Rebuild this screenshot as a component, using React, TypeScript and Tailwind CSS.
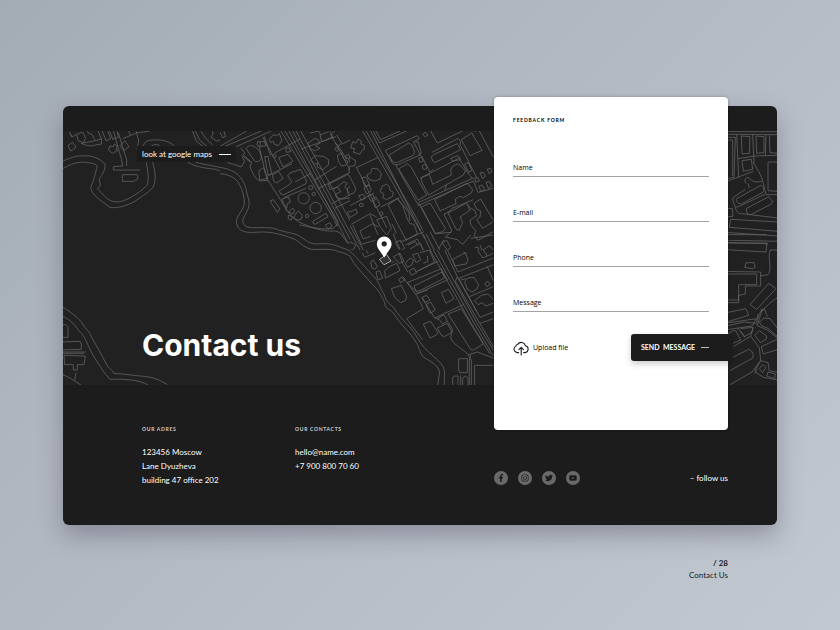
import React from "react";
import { FaFacebookF, FaInstagram, FaTwitter, FaYoutube } from "react-icons/fa";

const tiles: { x: number; y: number; w: number; h: number; lines: string[] }[] = [
  {
    // north-west bay
    x: 60,
    y: 100,
    w: 160,
    h: 150,
    lines: [
      "M0 186 C30 176 45 165 70 168 C95 164 125 178 135 193 C137 207 128 222 117 238 L122 255 L112 266 L135 290 C150 305 165 308 185 304 C215 295 250 268 262 255 C268 230 262 210 258 180 L250 137 C255 120 270 119 300 120 C320 122 332 128 345 140",
      "M0 212 C30 190 60 183 85 188 C105 190 115 195 110 205 C105 225 100 245 92 262 C95 285 120 300 150 322 C170 326 200 318 225 304 C250 285 270 275 280 260 C290 235 285 210 276 180",
      "M272 140 C283 130 295 133 302 140",
      "M24 136 L38 127 L48 142 L32 153Z",
      "M28 95 L36 111 L50 103 L54 122 L70 128 L77 115 L68 96 M36 111 L31 104 M50 103 L66 97",
      "M64 130 C80 138 98 140 110 134 L125 132 L124 117 L106 122Z M82 92 L84 98 L96 104 L106 122",
      "M114 92 L124 117 M126 92 L138 122 L152 116 L143 92 M148 92 L159 119",
      "M145 150 L150 138 L160 140 L163 132 L172 138 L168 148 L174 151 L158 160Z",
      "M160 92 L185 180 L188 198 L160 200 L160 210 L240 210 M175 98 L200 180 L200 198",
      "M180 137 L194 122 L207 140 L191 152Z M188 116 L232 98 L268 94 M172 94 L175 112 L158 118",
      "M205 92 L211 105 M228 92 L236 122 L231 150",
      "M187 224 H232 L234 236 L222 244 H187Z",
      "M397 92 L410 125 L430 140 M405 92 L420 122 L442 140 M422 92 L437 115 L458 135",
      "M457 92 L459 101 L453 112 L470 123 L489 117 L495 105 L486 96 L486 92",
      "M370 176 C385 190 405 202 460 207 C475 209 480 214 495 221 M400 183 C420 194 460 196 482 203",
    ],
  },
  {
    // north shore
    x: 220,
    y: 125,
    w: 130,
    h: 140,
    lines: [
      "M0 127 C25 131 48 140 58 154 C80 176 77 200 86 222 C92 248 78 262 71 278 C62 300 78 308 98 308 C130 308 160 306 178 316 L228 328 C255 340 262 357 290 357 C320 354 345 358 365 368 C375 371 383 374 391 379",
      "M0 146 C25 147 50 160 58 178 C68 195 73 215 73 236 C68 262 42 278 51 300 C58 322 82 323 105 322 C150 318 180 326 222 342 C240 350 250 368 275 373 C310 374 335 370 355 380 C370 383 382 388 391 394",
      "M0 22 L8 38 L16 35 L12 18 M0 64 L80 18 M10 66 L124 18 M42 68 L154 18",
      "M22 112 L64 126 L74 108 L67 98 L72 92 L95 112 L90 124 L94 136 L105 157 L120 168 L145 166",
      "M62 68 L74 84 L67 92 L92 112",
      "M78 71 C83 62 92 60 102 64 C117 72 123 85 124 102 C118 110 108 112 103 107Z",
      "M113 50 H133 L138 62 L117 65 L111 60Z M120 50 V64",
      "M128 36 L180 132 M134 95 L144 94 L155 146 L144 150Z M133 34 L152 92 M118 66 L140 160 L180 222",
      "M116 138 L131 128 L138 149 L144 160 L120 165Z",
      "M148 43 L160 29 L170 32 L178 26 L186 46 L175 62 L163 58 L160 49 L152 53Z",
      "M176 98 L203 88 L219 108 L189 126Z M157 92 L164 86 L169 94 L162 98Z M164 84 L240 42",
      "M157 150 L176 139 L189 160 L170 174 L161 168Z M142 153 L216 116 M196 70 L208 68 L212 80 L200 82Z",
      "M178 197 L210 178 L215 170 L203 152 L210 144 L241 133 L260 168 L258 176 L192 209 L182 207Z",
      "M150 228 L160 224 L180 252 L172 262Z",
      "M266 188 a6 6 0 1 0 12 0 a6 6 0 1 0 -12 0 M276 207 a5 5 0 1 0 10 0 a5 5 0 1 0 -10 0",
      "M234 220 a17 17 0 1 0 34 0 a17 17 0 1 0 -34 0 M270 249 a17 17 0 1 0 34 0 a17 17 0 1 0 -34 0",
      "M186 222 L206 216 L211 232 L202 236 L200 250 L192 238Z M196 252 L206 262 L216 250 L224 255 L219 267 L206 262",
      "M206 270 L218 276 L213 286 L204 280Z M221 279 L230 262 L236 258 L247 272 L243 283 L232 285Z",
      "M256 273 a5 5 0 1 0 10 0 a5 5 0 1 0 -10 0",
      "M278 289 L318 265 L324 275 L287 297 L281 297Z M316 300 L330 293 L336 304 L324 312Z",
      "M180 222 C200 258 215 278 238 292 C272 306 300 320 346 318 L360 323 L383 354 L404 354 L410 348",
      "M238 300 C265 303 295 316 340 310 L350 300 L344 288",
      "M183 18 L344 286 M195 18 L354 290 L350 304 M207 18 L383 352 M218 18 L394 350 M228 18 L404 348 M242 18 L420 340",
      "M226 170 L272 146 M192 218 L258 190",
      "M270 24 L296 18 L302 30 L326 20 M264 55 L284 40 L294 44 L300 54 L286 62 L300 70 L286 77 L272 73Z M300 30 L305 50 L338 36 L330 18",
      "M345 18 L332 28 L392 138 M244 72 L348 35 M350 30 L365 54 L356 62 L345 54 M348 66 L356 72 L351 80 L344 72Z",
      "M272 106 L285 92 L310 94 L326 104 L325 120 L308 134 L292 126 L292 114 L284 118 Z",
      "M352 92 L364 84 L373 104 L384 110 L378 120 L364 123 L356 110Z M354 62 L380 102 M365 58 L420 30",
      "M376 94 L386 88 L390 96 L379 102Z M386 102 L404 92 L410 108 L394 122Z M386 127 L404 122 L411 134 L396 144Z",
      "M282 166 L350 124 M296 190 L390 142 M384 132 L416 190",
      "M325 178 L384 148 L404 178 L382 190 L384 206 L396 218 L368 222 L350 218 L346 208 L362 200 L352 186 L330 194Z",
      "M342 192 L372 170 L382 176 L374 184 L388 206",
      "M336 235 L420 196 M344 250 L420 212 M382 262 L404 250 L412 266 L392 280Z",
    ],
  },
  {
    // centre blocks
    x: 350,
    y: 125,
    w: 150,
    h: 125,
    lines: [
      "M0 302 L40 375 M0 320 L30 375",
      "M38 18 L225 342 M48 18 L200 280 L218 316 M62 18 L212 318 M70 18 L88 54 L170 18 M78 18 L92 44 L150 18",
      "M2 70 L8 50 L18 54 L24 42 L34 48 L32 57 L42 60 L44 72 L36 76 L30 88 L18 84 L10 82 L14 70Z",
      "M0 96 L18 108 L14 122 L0 124 M18 128 L85 97 M0 156 L18 192 L12 204 L0 208 M20 128 L110 308",
      "M50 150 L62 144 L66 130 L84 132 L94 146 L90 162 L76 168 L58 164Z M36 158 L48 156 L58 178 L44 184Z",
      "M42 190 L58 180 L64 196 L50 208Z M26 212 L40 208 L46 220 L34 226Z M54 212 L68 208 L76 224 L64 230Z M0 242 L72 204",
      "M90 200 L98 182 L110 178 L118 184 L120 196 L130 202 L128 214 L110 224 L98 218 L102 208Z M92 246 L148 218",
      "M28 240 a6 5 0 1 0 12 0 a6 5 0 1 0 -12 0 M66 222 L78 216 L90 240 L76 248Z M0 262 L18 252 L22 264 L0 278",
      "M106 76 L202 32 L208 42 L190 50 L212 92 M118 90 L176 54 L186 60 L194 82 L188 92 L138 114 L126 108Z M106 76 L128 116 L140 120",
      "M196 52 L204 50 L214 84 L206 90 M218 28 L226 22 L234 30 L226 36Z M206 100 L214 96 L220 108 L210 112Z M217 126 a7 7 0 1 0 14 0 a7 7 0 1 0 -14 0",
      "M138 122 L210 90 M146 132 L172 116 L182 124 L230 210 L204 226Z M138 122 L206 242 M214 92 L240 142 L250 132",
      "M242 18 L262 54 L338 18 M246 82 L324 40 L332 50 L330 62 M244 96 L252 88 L322 56 L332 74 L256 112 L248 108Z",
      "M334 44 L365 24 L396 76 L360 92Z M352 16 L380 18 M388 18 L430 96 M332 62 L380 158",
      "M214 158 L238 148 L248 178 L304 150 L302 134 L310 122 L326 116 L346 138 L340 150 L236 210 L216 172Z",
      "M210 160 L330 98 M302 100 L324 92 L332 104 L308 108Z M344 118 L354 112 L366 136 L356 142Z M330 104 L352 142 L366 160",
      "M374 160 L384 158 L388 168 L378 172Z M390 144 L400 142 L406 154 L397 160Z M412 132 L422 130 L426 140 L417 146Z M386 184 L396 180 L404 194 L394 200Z M408 172 L418 170 L426 182 L415 190Z",
      "M206 232 L372 158 M284 196 L290 180 M204 242 L370 168 L384 202 L430 190",
      "M254 224 L352 174 L368 194 L364 204 L340 218 L330 214 L316 222 L318 236 L270 258Z",
      "M214 246 L240 234 L286 310 L278 320 L256 326Z M206 234 L256 326 L304 322 M282 268 L300 258 L306 250 L370 224",
      "M294 264 L350 234 L360 256 L330 276 L338 292 L328 316 L318 312Z M282 268 L306 318 L286 336 L322 344 L338 358 L362 330",
      "M372 236 L392 222 L430 286 M372 236 L380 252 L392 258 L390 276 L380 284 L398 310 L430 290 M354 240 L362 250 L374 256 L380 272 L360 286 L362 300 L378 318 L372 330 L384 346 L430 320",
      "M114 240 L142 220 L158 242 L172 282 L180 296 L192 298 L202 326 L168 346Z M142 220 L176 262 L180 288",
      "M88 264 L96 260 L100 268 L92 272Z M80 284 L110 274 L124 310 L110 330 L92 308Z M126 296 L138 322 L130 330 L150 372",
      "M4 298 L60 266 L80 276 M30 318 L68 296 L86 306 M30 318 L40 342 L62 334 M8 300 L34 358 L76 346 M60 270 L84 330",
      "M136 352 L152 346 L164 370 L150 378Z M166 360 L202 342 L236 404 M174 360 L196 350 L204 362 M180 372 L210 354 L220 376",
      "M150 352 L222 320 M220 328 L262 420 M228 326 L276 420 M240 320 L294 420 M276 352 L290 346 L302 368 L292 376Z M266 370 L282 345",
      "M306 396 L346 378 M374 368 L384 366 L394 396 M390 360 L404 402 M396 376 L420 362 L430 376 M362 340 L430 330",
      "M0 350 L18 360 L10 374 L0 376",
    ],
  },
  {
    // south-east shore
    x: 340,
    y: 250,
    w: 160,
    h: 140,
    lines: [
      "M30 4 C42 14 50 24 60 35 L100 78 C122 100 120 118 132 132 C138 156 148 160 162 174 C175 196 190 210 212 234 C228 252 236 275 252 292 C270 312 290 325 304 342 C320 364 311 380 313 405",
      "M30 19 C36 28 41 40 48 48 L98 104 C118 122 128 145 134 158 C135 182 152 174 162 192 C182 226 215 250 232 284 C242 304 240 318 262 328 C285 342 302 355 298 374 L293 405",
      "M66 8 L74 22 L106 8 M76 -4 L84 10 M92 36 L100 30 L112 50 L104 58 L96 54Z M108 66 L118 62 L128 84 L114 90Z",
      "M134 62 L148 50 L170 40 L180 62 L136 84Z M176 88 L188 80 L196 88 L182 98Z M154 40 L162 32 M160 20 L180 10 L192 34 L178 40 Z",
      "M154 116 L184 106 L200 140 L196 152 L182 158 L164 142Z",
      "M196 40 L210 24 L220 30 L216 44 L202 52Z M218 14 L234 10 L242 30 L228 38Z M208 62 L222 54 L230 68 L214 76Z M204 66 L190 44 L176 8",
      "M240 8 L268 0 L284 36 L236 62 M250 40 L264 34 L262 18 M226 66 L294 34",
      "M202 98 L304 56 L322 90 L234 130Z M222 108 L306 66 L314 84 L240 122 L228 124Z M184 82 L200 96 L232 140 L250 176 L200 206 L248 270",
      "M304 128 L326 118 L342 146 L318 160Z M228 132 L262 120 M246 142 L260 136 L270 150 L254 158Z M258 164 L272 156 L286 180 L270 190Z M246 142 L284 204 L370 164",
      "M250 222 L272 214 L294 248 L288 256 L270 264Z M294 204 L312 194 L322 212 L308 222Z M292 234 L322 220 L336 246 L314 260 L304 256Z M284 204 L296 208",
      "M324 192 L364 176 L430 282 L400 300 L392 298Z M322 214 L338 238 L332 262 L340 278 L386 314 L412 306 L460 324",
      "M270 0 L392 218 L450 312 M280 0 L400 216 L460 318 M292 0 L410 218 L460 300 M314 0 L352 80 L346 94 L460 290 M322 0 L354 66 L460 24",
      "M354 86 L460 44 M362 90 L378 86 M356 86 L420 202 L460 186 M420 220 L460 206 M352 80 L410 184",
      "M338 28 L376 8 L384 30 L378 42 L344 48Z M370 6 L380 12 M412 0 L428 24 L460 10 M430 0 L442 18",
      "M374 94 L384 84 L402 82 L416 104 L410 118 L396 126 L382 118Z M434 100 L444 94 L450 104 L440 110Z M442 50 L460 92",
      "M404 152 L424 136 L444 132 L460 148 M404 152 L414 164 L426 158 L438 168 L460 160 M388 140 L460 110",
      "M356 326 H382 V368 H360 L356 360Z M338 405 V382 L344 378 H354 V405 M362 376 V405 M368 405 V384 L376 378 L384 384 V405",
      "M384 316 L394 330 V405 M392 314 L388 330 V405 M404 405 V346 H460",
    ],
  },
  {
    // south-west shore
    x: 60,
    y: 290,
    w: 260,
    h: 100,
    lines: [
      "M0 46 C25 62 50 78 66 98 C74 116 86 120 94 140 C112 172 125 195 138 220 C146 238 158 238 162 250 C190 252 205 254 230 257 C262 260 285 260 322 284",
      "M0 76 C25 84 42 100 56 122 C76 138 78 156 90 178 C104 208 118 224 130 244 L150 268 C180 266 240 268 264 285",
      "M0 104 H18 L24 110 V142 H0 M0 156 L60 154 L64 162 V178 L0 180 M0 186 H78 M0 190 H72",
      "M12 196 L76 198 L72 224 H52 V240 H40 V224 H14Z M48 248 L44 270 M0 250 L30 264 L64 286",
    ],
  },
  {
    // north-east quarter
    x: 720,
    y: 100,
    w: 70,
    h: 145,
    lines: [
      "M0 95 H175 M0 103 L175 104 M0 112 H46 L42 232 L0 240 M0 120 H38 V228 M50 104 L56 232",
      "M64 108 L90 110 L88 160 L66 162Z M108 108 L132 110 V158 L110 160Z M148 106 L150 158 L175 160 M98 104 L102 190 M138 104 L136 166 M54 176 L104 168 L175 166",
      "M66 182 L94 178 L98 208 L70 214Z M0 252 L100 214 M100 186 C108 204 124 222 130 250 L138 284 L175 284 M175 186 H144 V272 L175 274",
      "M78 250 C70 238 78 230 88 234 C98 248 108 246 126 244 M84 250 L88 264",
      "M50 296 L122 256 C132 260 132 270 130 276 L64 312 C52 310 46 304 50 296Z M40 292 L76 268 M40 292 L38 300 L46 322 L60 318 L136 282",
      "M78 326 L146 290 L158 304 L154 312 L92 344 L82 342Z M0 326 H38 V350 H0 M46 322 L48 330 L56 340 L175 354",
      "M32 358 L175 366 M32 358 L28 382 L175 394 M0 396 L175 408 M0 404 L140 404 M0 428 L142 430 L138 450",
    ],
  },
  {
    // south-east quarter
    x: 720,
    y: 240,
    w: 70,
    h: 150,
    lines: [
      "M0 0 L175 4 M0 8 L140 10 L138 36 L0 28 M175 30 H150 C142 60 158 84 144 104 L120 108",
      "M78 68 L102 68 L106 82 L98 86 L74 82Z M0 94 L122 96 V138 H76 V162 L56 166 V188 H0 M0 102 H110 V134 H56 V180 H0",
      "M90 194 L146 130 L168 146 L110 208Z M175 172 C150 184 140 202 126 210 L112 256",
      "M0 222 L78 206 L86 226 L0 252 M0 252 L82 240 L112 236 L126 206 M0 262 L72 246 L110 250 L114 222 M0 272 L96 258 L108 238",
      "M62 266 L98 262 L96 276 L74 290 L62 274 M46 270 L62 300 L38 310 M54 264 L74 292 M20 284 L44 270",
      "M118 246 L132 234 L150 236 L175 268 M118 246 L126 258 L142 264 L175 292 M124 214 L134 208 L142 230 M110 256 L142 270 L175 296",
      "M104 286 L118 272 L140 288 L138 298 L122 308Z M100 262 L92 288 L118 324 L122 362 L104 394",
      "M124 320 L175 296 M124 320 L130 342 L175 328 M38 352 L86 328 C98 332 102 346 98 354 L30 392 M40 320 L90 290 M30 434 L96 396 L122 362 L144 368 L148 392",
      "M118 386 L128 374 L138 382 L128 398Z M106 396 L130 412 L175 420 M144 396 L166 402 L164 416 L140 408Z M112 388 L104 400 M148 392 L175 398",
    ],
  },
];

function CityMap() {
  return (
    <svg
      className="col-span-full col-start-1 row-start-2 h-full w-full bg-[#212121]"
      viewBox="63 131 714 254"
      preserveAspectRatio="xMinYMid slice"
      aria-hidden="true"
    >
      <g fill="none" stroke="#636363" strokeWidth="2.4" strokeLinejoin="round">
        {tiles.map((t) => (
          <svg key={t.x + "-" + t.y} x={t.x} y={t.y} width={t.w} height={t.h} viewBox={`0 0 ${t.w * 3} ${t.h * 3}`}>
            {t.lines.map((d) => (
              <path key={d} d={d} />
            ))}
          </svg>
        ))}
      </g>
      <path d="M379.5 259.5 L386.5 254.5 L391 261 L384 264.8 Z" fill="#333" stroke="#aaa" strokeWidth="1" />
      <path
        d="M384.2 236.6 a7.4 7.4 0 0 1 7.4 7.4 c0 4.5 -4.6 8.5 -7.4 13.6 c-2.8 -5.1 -7.4 -9.1 -7.4 -13.6 a7.4 7.4 0 0 1 7.4 -7.4 Z"
        fill="#fff"
      />
      <circle cx="384.2" cy="243.8" r="2.6" fill="#222" />
    </svg>
  );
}

function CloudIcon() {
  return (
    <svg className="h-4 w-4" viewBox="0 0 16 16" fill="none" stroke="#1c1c1c" strokeWidth="1.1" strokeLinecap="round" strokeLinejoin="round" aria-hidden="true">
      <path d="M5.6 12.6 H4.2 A3.5 3.5 0 0 1 2.8 6.1 A2.2 2.2 0 0 1 4.8 4.3 A4.2 4.2 0 0 1 12.4 5.7 A3.5 3.5 0 0 1 12 12.6 H10.6" />
      <path d="M8.2 15 V7.4 M5.9 9.6 L8.2 7.3 L10.5 9.6" />
    </svg>
  );
}

const fields = [
  { id: "name", label: "Name", type: "text" },
  { id: "email", label: "E-mail", type: "email" },
  { id: "phone", label: "Phone", type: "tel" },
  { id: "message", label: "Message", type: "text" },
];

function FeedbackForm() {
  return (
    <form
      className="z-10 col-start-2 row-span-3 row-start-1 -mt-[9px] self-start rounded-[4px] bg-white px-[19px] pt-[19px] pb-[69px] font-['Open_Sans','Noto_Sans',sans-serif] text-black shadow-[0_0_3px_rgba(0,0,0,0.3)]"
      onSubmit={(e) => e.preventDefault()}
    >
      <h2 className="mb-2 font-['Lato',sans-serif] text-[5px] leading-[8px] font-bold tracking-[0.8px]">FEEDBACK FORM</h2>
      {fields.map((f) => (
        <div key={f.id} className="flex h-[45px] items-end border-b border-[#a3a3a3] pb-[2px] text-[7px] leading-[12px]">
          <label htmlFor={f.id} className="font-medium">
            {f.label}
          </label>
          <input id={f.id} type={f.type} className="ml-1 h-3 min-w-0 flex-1 outline-none" />
        </div>
      ))}
      <div className="mt-[22px] flex items-center justify-between">
        <label htmlFor="file" className="flex cursor-pointer items-center gap-1 text-[7px] leading-[12px] font-medium">
          <CloudIcon />
          Upload file
          <input id="file" type="file" className="sr-only" />
        </label>
        <button
          type="submit"
          className="-mr-6 flex h-[27px] items-center gap-[6px] rounded-l-[3px] bg-[#1c1c1c] pr-6 pl-[10px] font-['Lato',sans-serif] text-[7px] font-bold text-white shadow-[0_3px_6px_rgba(0,0,0,0.2)]"
        >
          SEND&nbsp; MESSAGE
          <span className="h-px w-2 bg-[#bbb]" />
        </button>
      </div>
    </form>
  );
}

const socials = [
  { name: "Facebook", Icon: FaFacebookF },
  { name: "Instagram", Icon: FaInstagram },
  { name: "Twitter", Icon: FaTwitter },
  { name: "YouTube", Icon: FaYoutube },
];

export default function App() {
  return (
    <div className="min-h-screen bg-[linear-gradient(135deg,#a3abb5_0%,#b0b7c1_35%,#b8bfc9_65%,#c1c8d1_100%)] pt-[106px] font-['Lato','Liberation_Sans',sans-serif]">
      <main className="mx-auto grid w-[85%] grid-cols-[minmax(0,1fr)_234px_49px] grid-rows-[25px_254px_140px] rounded-[6px] bg-[#1c1c1c] text-white shadow-[0_10px_24px_rgba(60,50,70,0.35)]">
        <CityMap />
        <div className="col-start-1 row-start-2 flex flex-col items-start justify-between pt-[15px] pb-6">
          <a href="#map" className="ml-[74px] flex h-4 items-center gap-[7px] bg-[#1c1c1c] px-[5px] text-[8px] leading-[14px]">
            look at google maps
            <span className="h-px w-3 bg-white" />
          </a>
          <h1 className="ml-[79px] font-['Inter','Liberation_Sans',sans-serif] text-[30px] leading-8 font-bold">Contact us</h1>
        </div>
        <FeedbackForm />
        <address className="col-start-1 row-start-3 ml-[79px] grid grid-cols-[153px_1fr] content-start pt-10 text-[8px] leading-[14px] not-italic">
          <section>
            <h2 className="mb-3 text-[5px] leading-[8px] font-bold tracking-[0.7px] text-[#ccc]">OUR ADRES</h2>
            <p>123456 Moscow</p>
            <p>Lane Dyuzheva</p>
            <p>building 47 office 202</p>
          </section>
          <section>
            <h2 className="mb-3 text-[5px] leading-[8px] font-bold tracking-[0.7px] text-[#ccc]">OUR CONTACTS</h2>
            <a className="block" href="mailto:hello@name.com">hello@name.com</a>
            <a className="block" href="tel:+79008007060">+7 900 800 70 60</a>
          </section>
        </address>
        <div className="col-start-2 row-start-3 flex items-center justify-between self-end pb-10 text-[8px] leading-[14px]">
          <nav className="flex gap-[10px]">
            {socials.map(({ name, Icon }) => (
              <a key={name} href={"#" + name.toLowerCase()} aria-label={name} className="flex h-[14px] w-[14px] items-center justify-center rounded-full bg-[#696969] text-[#1c1c1c]">
                <Icon className="h-2 w-2" />
              </a>
            ))}
          </nav>
          <p>– follow us</p>
        </div>
      </main>
      <footer className="mx-auto mt-8 w-[85%] pr-[49px] text-right text-[8px] leading-[12px] text-[#1c1c22]">
        <p className="font-bold">/ 28</p>
        <p>Contact Us</p>
      </footer>
    </div>
  );
}
